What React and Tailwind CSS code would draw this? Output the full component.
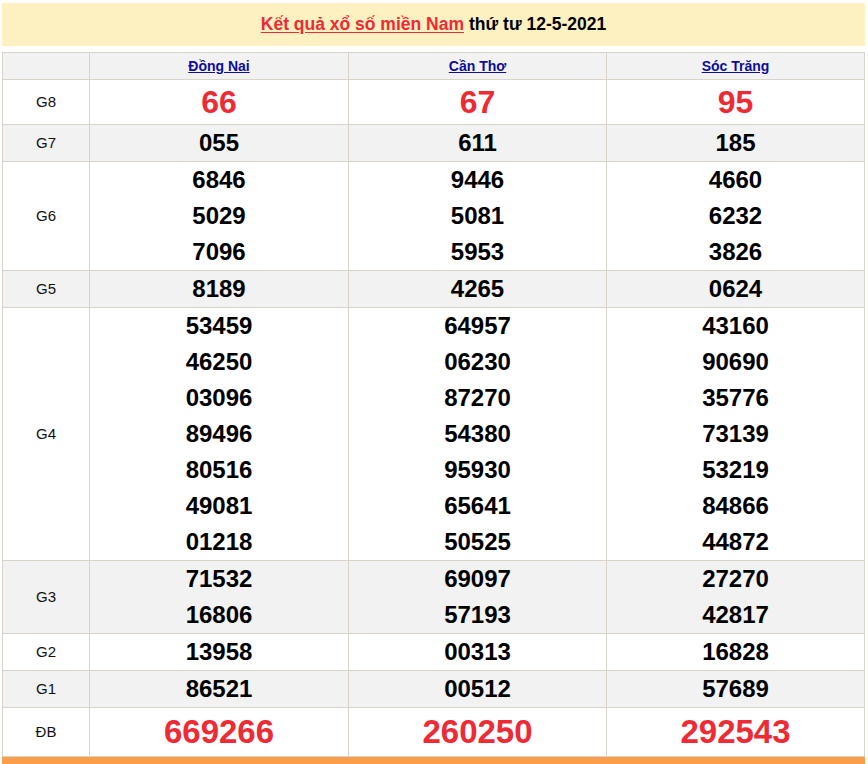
import React from "react";

const provinces = ["Đồng Nai", "Cần Thơ", "Sóc Trăng"];

const rows = [
  { label: "G8", bg: "bg-white", h: "h-[44px]", big: "text-[32px]", vals: [["66"], ["67"], ["95"]] },
  { label: "G7", bg: "bg-[#f2f2f2]", vals: [["055"], ["611"], ["185"]] },
  { label: "G6", bg: "bg-white", vals: [["6846", "5029", "7096"], ["9446", "5081", "5953"], ["4660", "6232", "3826"]] },
  { label: "G5", bg: "bg-[#f2f2f2]", vals: [["8189"], ["4265"], ["0624"]] },
  {
    label: "G4",
    bg: "bg-white",
    vals: [
      ["53459", "46250", "03096", "89496", "80516", "49081", "01218"],
      ["64957", "06230", "87270", "54380", "95930", "65641", "50525"],
      ["43160", "90690", "35776", "73139", "53219", "84866", "44872"],
    ],
  },
  { label: "G3", bg: "bg-[#f2f2f2]", vals: [["71532", "16806"], ["69097", "57193"], ["27270", "42817"]] },
  { label: "G2", bg: "bg-white", vals: [["13958"], ["00313"], ["16828"]] },
  { label: "G1", bg: "bg-[#f2f2f2]", vals: [["86521"], ["00512"], ["57689"]] },
  { label: "ĐB", bg: "bg-white", h: "h-[48px]", big: "text-[33px]", vals: [["669266"], ["260250"], ["292543"]] },
];

export default function App() {
  return (
    <div
      className="w-[868px] h-[764px] overflow-hidden bg-white pl-[2px] pt-[3px]"
      style={{ fontFamily: '"Liberation Sans", Arial, sans-serif' }}
    >
      <div className="w-[863px] h-[43px] bg-[#fef1c1] flex items-center justify-center text-[17.5px] font-bold">
        <a className="text-[#ee2a35] underline underline-offset-2">Kết quả xổ số miền Nam</a>
        <span className="text-black ml-[5px]">thứ tư 12-5-2021</span>
      </div>
      <div className="mt-[6px] w-[863px] grid grid-cols-[86px_258px_257px_257px] gap-px bg-[#dad3cb] border border-[#dad3cb]">
        <div className="bg-[#f2f2f2] h-[26px]" />
        {provinces.map((p) => (
          <div key={p} className="bg-[#f2f2f2] h-[26px] flex items-center justify-center">
            <a className="text-[14px] font-bold text-[#0d0d9a] underline underline-offset-1">{p}</a>
          </div>
        ))}
        {rows.map((r) => (
          <React.Fragment key={r.label}>
            <div className={`${r.bg} ${r.h || ""} flex items-center justify-center text-[15px] text-[#111]`}>
              {r.label}
            </div>
            {r.vals.map((col, i) => (
              <div key={i} className={`${r.bg} ${r.h || ""} flex flex-col items-center justify-center`}>
                {col.map((v, j) =>
                  r.big ? (
                    <div key={j} className={`${r.big} font-bold text-[#ee2a35] leading-[44px]`}>
                      {v}
                    </div>
                  ) : (
                    <div key={j} className="text-[24px] font-bold text-black leading-[36px]">
                      {v}
                    </div>
                  )
                )}
              </div>
            ))}
          </React.Fragment>
        ))}
      </div>
      <div className="w-[863px] h-[8px] bg-[#fb9e4a]" />
    </div>
  );
}
